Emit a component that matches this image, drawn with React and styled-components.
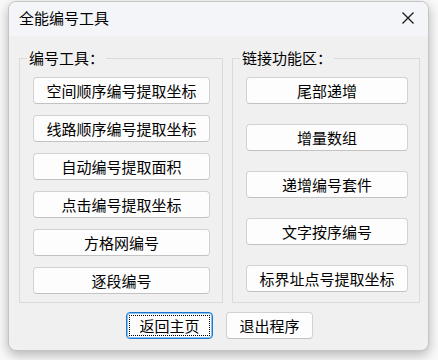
import React from 'react';
import styled, { createGlobalStyle } from 'styled-components';

const GlobalStyle = createGlobalStyle`
    html, body { margin: 0; padding: 0; background: #f9f9f9; }
    body {
        font-family: 'Noto Sans CJK SC', 'Noto Sans', sans-serif;
        color: #000;
    }
`;

const Page = styled.div`
    width: 438px;
    height: 360px;
    padding: 1px 0 0 8px;
    box-sizing: border-box;
`;

const Window = styled.div`
    width: 421px;
    height: 350px;
    box-sizing: border-box;
    background: #f0f0f0;
    border: 1px solid #c4c4c4;
    border-radius: 8px;
    box-shadow: 0 4px 12px rgba(0, 0, 0, 0.28);
    overflow: hidden;
    display: flex;
    flex-direction: column;
`;

const TitleBar = styled.div`
    height: 34px;
    flex: none;
    display: flex;
    align-items: center;
    justify-content: space-between;
    padding: 0 14px 0 10px;
    background: #f3f5f9;
    font-size: 15px;
    line-height: 20px;
`;

const Title = styled.span`
    margin-top: -3px;
`;

const CloseIcon = styled.svg`
    width: 12px;
    height: 12px;
    margin-top: -3px;
    line {
        stroke: #1a1a1a;
        stroke-width: 1.3;
    }
`;

const Body = styled.div`
    flex: 1;
    display: flex;
    flex-direction: column;
    padding: 12px 8px 0 10px;
`;

const Groups = styled.div`
    display: flex;
    gap: 9px;
`;

const Group = styled.fieldset`
    box-sizing: border-box;
    width: ${(p) => p.$width}px;
    height: 255px;
    margin: 0;
    padding: 9px 0 0 13px;
    border: 1px solid #dadada;
    border-radius: 0;
    display: flex;
    flex-direction: column;
    gap: ${(p) => p.$gap}px;
`;

const Legend = styled.legend`
    margin-left: -6px;
    padding: 0 2px;
    font-size: 15px;
    line-height: 20px;
`;

const Button = styled.button`
    position: relative;
    box-sizing: border-box;
    width: ${(p) => p.$width}px;
    height: 27px;
    flex: none;
    padding: 0;
    background: #fdfdfd;
    border: 1px solid ${(p) => (p.$focused ? '#1a78d0' : '#d2d2d2')};
    border-bottom-color: ${(p) => (p.$focused ? '#1a78d0' : '#c2c2c2')};
    box-shadow: ${(p) => (p.$focused ? 'inset 0 0 0 1px #8cc0ee' : 'none')};
    border-radius: 4px;
    font-family: 'Noto Sans CJK SC', 'Noto Sans', sans-serif;
    font-size: 15px;
    line-height: 20px;
    color: #000;
    &::after {
        content: '';
        display: ${(p) => (p.$focused ? 'block' : 'none')};
        position: absolute;
        inset: 2px;
        border: 1px dotted #000;
        border-radius: 1px;
    }
`;

const Footer = styled.div`
    display: flex;
    justify-content: center;
    gap: 13px;
    padding-top: 9px;
`;

const leftTools = [
    '空间顺序编号提取坐标',
    '线路顺序编号提取坐标',
    '自动编号提取面积',
    '点击编号提取坐标',
    '方格网编号',
    '逐段编号',
];

const linkTools = ['尾部递增', '增量数组', '递增编号套件', '文字按序编号', '标界址点号提取坐标'];

const App = () => (
    <Page>
        <GlobalStyle />
        <Window>
            <TitleBar>
                <Title>全能编号工具</Title>
                <CloseIcon viewBox="0 0 12 12">
                    <line x1="0.5" y1="0.5" x2="11.5" y2="11.5" />
                    <line x1="11.5" y1="0.5" x2="0.5" y2="11.5" />
                </CloseIcon>
            </TitleBar>
            <Body>
                <Groups>
                    <Group $width={204} $gap={11}>
                        <Legend>编号工具：</Legend>
                        {leftTools.map((t) => (
                            <Button key={t} $width={177}>{t}</Button>
                        ))}
                    </Group>
                    <Group $width={188} $gap={20}>
                        <Legend>链接功能区：</Legend>
                        {linkTools.map((t) => (
                            <Button key={t} $width={162}>{t}</Button>
                        ))}
                    </Group>
                </Groups>
                <Footer>
                    <Button $width={87} $focused>返回主页</Button>
                    <Button $width={87}>退出程序</Button>
                </Footer>
            </Body>
        </Window>
    </Page>
);

export default App;
